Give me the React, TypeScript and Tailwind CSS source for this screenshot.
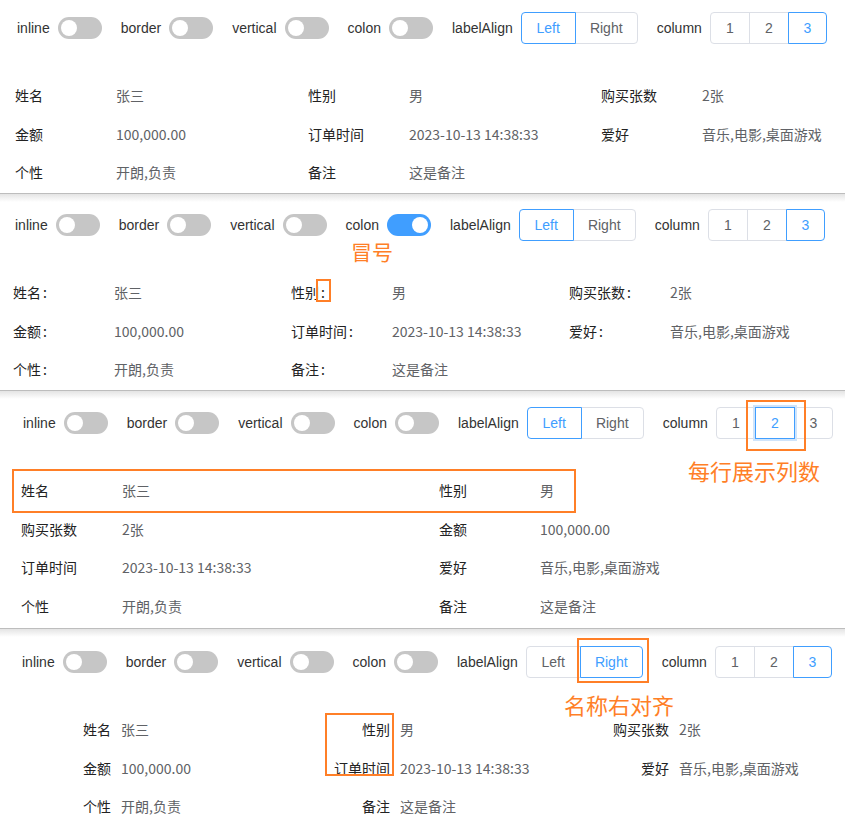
import type { ReactNode } from "react";

type Item = { label: string; value: string };

const items: Item[] = [
  { label: "姓名", value: "张三" },
  { label: "性别", value: "男" },
  { label: "购买张数", value: "2张" },
  { label: "金额", value: "100,000.00" },
  { label: "订单时间", value: "2023-10-13 14:38:33" },
  { label: "爱好", value: "音乐,电影,桌面游戏" },
  { label: "个性", value: "开朗,负责" },
  { label: "备注", value: "这是备注" },
];

function Switch({ on }: { on?: boolean }) {
  return (
    <span
      className={`relative inline-block h-[22px] w-[44px] shrink-0 rounded-full ${
        on ? "bg-[#409eff]" : "bg-[#c6c6c6]"
      }`}
    >
      <span
        className={`absolute top-[3px] h-[16px] w-[16px] rounded-full bg-white ${
          on ? "right-[3px]" : "left-[3px]"
        }`}
      />
    </span>
  );
}

type SegOpt = { text: string; w: string };

function Segmented({
  options,
  active,
  focus,
}: {
  options: SegOpt[];
  active: number;
  focus?: boolean;
}) {
  return (
    <div className="flex h-[32px]">
      {options.map((o, i) => {
        const on = i === active;
        return (
          <span
            key={o.text}
            className={`relative flex h-full items-center justify-center border ${o.w} ${
              i > 0 ? "-ml-px" : ""
            } ${i === 0 ? "rounded-l-[4px]" : ""} ${
              i === options.length - 1 ? "rounded-r-[4px]" : ""
            } ${
              on
                ? "z-10 border-[#409eff] text-[#409eff]"
                : "border-[#dcdfe6] text-[#606266]"
            } ${on && focus ? "shadow-[0_0_0_2px_#cfe4fb]" : ""}`}
          >
            {o.text}
          </span>
        );
      })}
    </div>
  );
}

function Field({ label, children }: { label: string; children: ReactNode }) {
  return (
    <div className="flex items-center gap-2">
      <span>{label}</span>
      {children}
    </div>
  );
}

function Toolbar({
  colon,
  right,
  column,
  focusCol,
}: {
  colon?: boolean;
  right?: boolean;
  column: number;
  focusCol?: boolean;
}) {
  return (
    <div className="flex h-[32px] items-center gap-[19px] whitespace-nowrap font-['Liberation_Sans',Arial,sans-serif] text-[14px] text-[#333]">
      <Field label="inline">
        <Switch />
      </Field>
      <Field label="border">
        <Switch />
      </Field>
      <Field label="vertical">
        <Switch />
      </Field>
      <Field label="colon">
        <Switch on={colon} />
      </Field>
      <Field label="labelAlign">
        <Segmented
          options={[
            { text: "Left", w: "w-[55px]" },
            { text: "Right", w: "w-[63px]" },
          ]}
          active={right ? 1 : 0}
        />
      </Field>
      <Field label="column">
        <Segmented
          options={[
            { text: "1", w: "w-[40px]" },
            { text: "2", w: "w-[40px]" },
            { text: "3", w: "w-[39px]" },
          ]}
          active={column - 1}
          focus={focusCol}
        />
      </Field>
    </div>
  );
}

function Descriptions({
  gridClass,
  colon,
  right,
}: {
  gridClass: string;
  colon?: boolean;
  right?: boolean;
}) {
  return (
    <div
      className={`mt-[32px] grid font-['Noto_Sans_CJK_SC','Noto_Sans',sans-serif] text-[14px] ${gridClass}`}
    >
      {items.map((it) => (
        <div key={it.label} className="flex h-[38.5px] items-center leading-none">
          <span
            className={`w-[101px] shrink-0 pr-[10px] text-[#222] ${
              right ? "text-right" : ""
            }`}
          >
            {it.label}
            {colon && <span className="ml-[2px]">:</span>}
          </span>
          <span className="whitespace-nowrap text-[#606266]">{it.value}</span>
        </div>
      ))}
    </div>
  );
}

function Note({ children, className }: { children: ReactNode; className: string }) {
  return (
    <span
      className={`absolute font-['Noto_Sans_CJK_SC',sans-serif] leading-none text-[#ff7f27] ${className}`}
    >
      {children}
    </span>
  );
}

function Box({ className }: { className: string }) {
  return <span className={`absolute border-2 border-[#ff7f27] ${className}`} />;
}

export default function App() {
  return (
    <div className="h-[840px] w-[845px] overflow-hidden bg-white">
      {/* 1 — defaults */}
      <section className="relative h-[194px] overflow-hidden border-b border-[#bdbdbd] pt-[12px] pl-[15px]">
        <div className="pl-[2px]">
          <Toolbar column={3} />
        </div>
        <Descriptions gridClass="grid-cols-[repeat(3,293px)]" />
      </section>

      {/* 2 — colon */}
      <section className="relative h-[197px] overflow-hidden border-b border-[#bdbdbd] bg-[linear-gradient(#e4e4e4,#fff_8px)] pt-[15px] pl-[13px]">
        <div className="pl-[2px]">
          <Toolbar column={3} colon />
        </div>
        <Descriptions gridClass="grid-cols-[repeat(3,278px)]" colon />
        <Note className="left-[351px] top-[47px] text-[21px]">冒号</Note>
        <Box className="left-[316px] top-[85px] h-[23px] w-[15px]" />
      </section>

      {/* 3 — two columns */}
      <section className="relative h-[238px] overflow-hidden border-b border-[#bdbdbd] bg-[linear-gradient(#e4e4e4,#fff_8px)] pt-[16px] pl-[21px]">
        <div className="pl-[2px]">
          <Toolbar column={2} focusCol />
        </div>
        <Descriptions gridClass="grid-cols-[repeat(2,418px)]" />
        <Note className="left-[688px] top-[68px] text-[22px]">每行展示列数</Note>
        <Box className="left-[746px] top-[9px] h-[51px] w-[60px]" />
        <Box className="left-[12px] top-[78px] h-[44px] w-[564px]" />
      </section>

      {/* 4 — labels aligned right */}
      <section className="relative h-[211px] overflow-hidden bg-[linear-gradient(#e4e4e4,#fff_8px)] pt-[17px] pl-[20px]">
        <div className="pl-[2px]">
          <Toolbar column={3} right />
        </div>
        <Descriptions gridClass="grid-cols-[repeat(3,279px)]" right />
        <Note className="left-[564px] top-[64px] text-[22px]">名称右对齐</Note>
        <Box className="left-[577px] top-[9px] h-[45px] w-[72px]" />
        <Box className="left-[325px] top-[84px] h-[63px] w-[69px]" />
      </section>
    </div>
  );
}
